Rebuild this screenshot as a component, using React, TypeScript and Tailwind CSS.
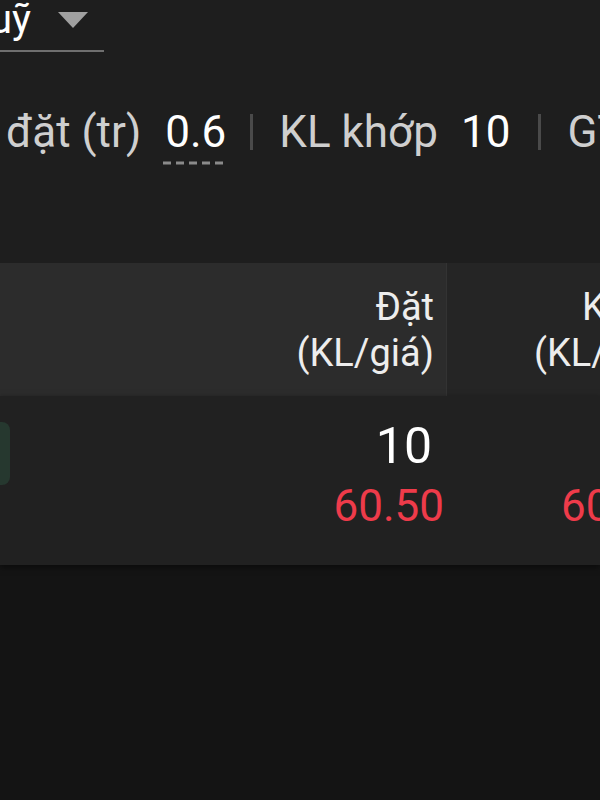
import React from "react";

export default function App() {
  return (
    <div
      className="w-[600px] h-[800px] bg-[#141414] overflow-hidden relative whitespace-nowrap"
      style={{ fontFamily: "Roboto, 'Noto Sans', sans-serif" }}
    >
      {/* top area */}
      <div className="h-[263px] bg-[#1e1e1e] flex flex-col">
        <div className="w-[104px] h-[52px] border-b-2 border-[#6f6f6f] flex items-start overflow-hidden">
          <span className="shrink-0 text-[40px] leading-[40px] text-white -ml-[10px]">uỹ</span>
          <svg width="30" height="16" viewBox="0 0 30 16" className="shrink-0 ml-[27px] mt-[12px]">
            <polygon points="0,0 30,0 15,16" fill="#a0a0a0" />
          </svg>
        </div>
        <div className="flex items-center mt-[58px] h-[44px] text-[44px] leading-[44px]">
          <span className="shrink-0 text-[#cfcfcf] ml-[6px]">đặt (tr)</span>
          <span className="shrink-0 text-white ml-[24px] relative">
            0.6
            <svg width="62" height="4" viewBox="0 0 62 4" className="absolute -left-[2px] -bottom-[11px]">
              <line x1="0" y1="2" x2="62" y2="2" stroke="#8a8a8a" strokeWidth="3" strokeDasharray="8 5" />
            </svg>
          </span>
          <span className="shrink-0 w-[3px] h-[36px] bg-[#4a4a4a] ml-[24px]" />
          <span className="shrink-0 text-[#cfcfcf] ml-[26px]">KL khớp</span>
          <span className="shrink-0 text-white ml-[23px]">10</span>
          <span className="shrink-0 w-[3px] h-[36px] bg-[#4a4a4a] ml-[28px]" />
          <span className="shrink-0 text-[#cfcfcf] ml-[26px]">GT</span>
        </div>
      </div>

      {/* table header */}
      <div className="flex h-[133px]">
        <div className="w-[446px] shrink-0 bg-[#2c2c2c] flex flex-col items-end justify-center pr-[12px] text-[38px] leading-[46px] text-[#ededed]">
          <span>Đặt</span>
          <span>(KL/giá)</span>
        </div>
        <div className="w-[1px] shrink-0 bg-[#333333]" />
        <div className="flex-1 bg-[#252525] flex flex-col items-start justify-center text-[38px] leading-[46px] text-[#ededed] overflow-hidden">
          <span className="ml-[135px]">Khớp</span>
          <span className="ml-[87px]">(KL/giá)</span>
        </div>
      </div>

      {/* data row */}
      <div className="flex h-[169px] bg-[#212121] relative shadow-[0_2px_6px_rgba(0,0,0,0.5)]">
        <div className="absolute left-[-10px] top-[26px] w-[20px] h-[63px] rounded-[8px] bg-[#26382f]" />
        <div className="w-[446px] shrink-0 flex flex-col items-end pt-[22px] pr-[2px]">
          <span className="text-[50px] leading-[56px] text-white mr-[12px]">10</span>
          <span className="text-[44px] leading-[52px] text-[#ee3b4a] mt-[6px]">60.50</span>
        </div>
        <div className="flex-1 flex flex-col items-start pt-[22px] overflow-hidden">
          <span className="text-[50px] leading-[56px] text-white ml-[160px]">10</span>
          <span className="text-[44px] leading-[52px] text-[#ee3b4a] mt-[6px] ml-[115px]">60.50</span>
        </div>
      </div>
    </div>
  );
}
